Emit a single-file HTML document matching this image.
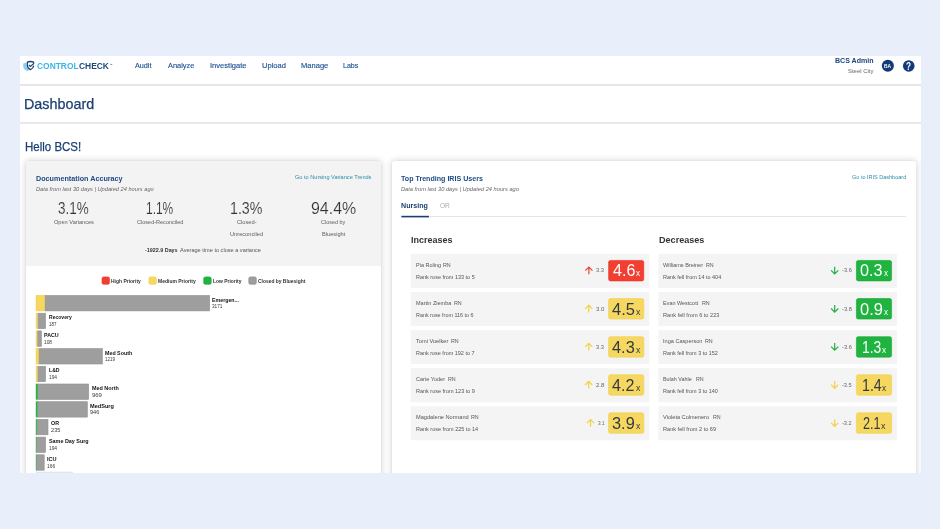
<!DOCTYPE html>
<html><head><meta charset="utf-8"><title>Dashboard</title>
<style>
html,body{margin:0;padding:0;}
body{width:940px;height:529px;overflow:hidden;background:#e8effa;font-family:"Liberation Sans", sans-serif;position:relative;}
#s div{position:absolute;}
#s svg{position:absolute;overflow:visible;}
#t{position:absolute;left:0;top:0;width:940px;height:529px;will-change:transform;}
#t span{position:absolute;white-space:pre;line-height:1;transform-origin:0 0;}
</style></head><body>
<div id="s">
<div style="left:20.00px;top:56.00px;width:901.00px;height:417.00px;background:#fff;"></div>
<div style="left:20.00px;top:84.00px;width:901.00px;height:2.00px;background:#e6e6e6;"></div>
<div style="left:20.00px;top:122.00px;width:901.00px;height:2.00px;background:#e9e9e9;"></div>
<div style="left:26px;top:161px;width:355px;height:330px;background:#fff;border-radius:2px;box-shadow:0 0 7px rgba(0,0,0,.2),0 0 1px rgba(0,0,0,.12);"></div>
<div style="left:26.00px;top:161.00px;width:355.00px;height:105.00px;background:#f3f3f3;border-radius:2px 2px 0 0;"></div>
<div style="left:392px;top:161px;width:524px;height:330px;background:#fff;border-radius:2px;box-shadow:0 0 7px rgba(0,0,0,.2),0 0 1px rgba(0,0,0,.12);"></div>
<svg style="left:0;top:0" width="940" height="529" viewBox="0 0 940 529">
<path d="M26.4 62.4 L23.2 63.6 L23.2 66.4 Q23.6 69.4 27.4 71 Q28.8 70.6 29.8 69.8 Q26.4 68.2 26.4 65 Z" fill="#86d3f0"/>
<path d="M33.65 63.7 V62.1 Q30.5 60.9 27.35 62.1 V65.6 Q27.4 68.3 30.5 69.55 Q33.4 68.4 33.8 65.7" fill="none" stroke="#1c4275" stroke-width="1.25" stroke-linejoin="round"/>
<path d="M28.9 65.0 L30.4 66.4 L33.75 63.5" fill="none" stroke="#1c4275" stroke-width="1.15"/>
</svg>
<svg style="left:0;top:0" width="940" height="529" viewBox="0 0 940 529"><circle cx="887.85" cy="65.8" r="6.05" fill="#12397a"/><circle cx="908.75" cy="65.95" r="5.8" fill="#12397a"/></svg>
<svg style="left:0;top:0" width="940" height="529" viewBox="0 0 940 529"><rect x="102.00" y="276.90" width="7.50" height="7.40" rx="1.6" fill="#f23f31" stroke="#ee2f27" stroke-width="0.6"/><rect x="148.90" y="276.90" width="7.50" height="7.40" rx="1.6" fill="#f6d860" stroke="#efce4c" stroke-width="0.6"/><rect x="203.70" y="276.90" width="7.50" height="7.40" rx="1.6" fill="#1fb33f" stroke="#17a536" stroke-width="0.6"/><rect x="248.80" y="276.90" width="7.50" height="7.40" rx="1.6" fill="#9e9e9e" stroke="#878787" stroke-width="0.6"/><rect x="44.90" y="295.50" width="164.70" height="15.40" fill="#9e9e9e" stroke="#8f8f8f" stroke-width="0.6"/><rect x="36.10" y="295.50" width="8.50" height="15.40" fill="#f6d860" stroke="#efcd45" stroke-width="0.6"/><rect x="37.70" y="313.20" width="7.80" height="15.40" fill="#9e9e9e" stroke="#8f8f8f" stroke-width="0.6"/><rect x="35.80" y="312.90" width="1.90" height="16.00" fill="#f6d860"/><rect x="37.30" y="330.90" width="4.10" height="15.40" fill="#9e9e9e" stroke="#8f8f8f" stroke-width="0.6"/><rect x="35.80" y="330.60" width="1.50" height="16.00" fill="#f6d860"/><rect x="38.70" y="348.60" width="63.60" height="15.40" fill="#9e9e9e" stroke="#8f8f8f" stroke-width="0.6"/><rect x="36.10" y="348.60" width="2.30" height="15.40" fill="#f6d860" stroke="#efcd45" stroke-width="0.6"/><rect x="37.50" y="366.30" width="8.00" height="15.40" fill="#9e9e9e" stroke="#8f8f8f" stroke-width="0.6"/><rect x="35.80" y="366.00" width="1.70" height="16.00" fill="#f6d860"/><rect x="37.70" y="384.00" width="50.90" height="15.40" fill="#9e9e9e" stroke="#8f8f8f" stroke-width="0.6"/><rect x="35.80" y="383.70" width="1.90" height="16.00" fill="#1fb33f"/><rect x="37.50" y="401.70" width="49.80" height="15.40" fill="#9e9e9e" stroke="#8f8f8f" stroke-width="0.6"/><rect x="35.80" y="401.40" width="1.70" height="16.00" fill="#1fb33f"/><rect x="36.80" y="419.40" width="11.20" height="15.40" fill="#9e9e9e" stroke="#8f8f8f" stroke-width="0.6"/><rect x="35.80" y="419.10" width="1.00" height="16.00" fill="#1fb33f"/><rect x="36.40" y="437.10" width="9.10" height="15.40" fill="#9e9e9e" stroke="#8f8f8f" stroke-width="0.6"/><rect x="35.80" y="436.80" width="0.60" height="16.00" fill="#1fb33f"/><rect x="36.40" y="454.80" width="7.80" height="15.40" fill="#9e9e9e" stroke="#8f8f8f" stroke-width="0.6"/><rect x="35.80" y="454.50" width="0.60" height="16.00" fill="#1fb33f"/><rect x="35.80" y="471.70" width="37.00" height="3.00" fill="#e4e4e4"/></svg>
<div style="left:401.00px;top:216.00px;width:505.00px;height:1.00px;background:#e4e4e4;"></div>
<svg style="left:0;top:0" width="940" height="529" viewBox="0 0 940 529"><rect x="401.4" y="215.8" width="27.5" height="1.6" fill="#1c3f72"/></svg>
<svg style="left:0;top:0" width="940" height="529" viewBox="0 0 940 529"><rect x="410.60" y="253.90" width="238.60" height="34.00" fill="#f4f4f4"/><rect x="608.60" y="260.45" width="35.20" height="20.50" rx="1.9" fill="#f23f31" stroke="#ee2f27" stroke-width="0.6"/><rect x="410.60" y="292.00" width="238.60" height="34.00" fill="#f4f4f4"/><rect x="608.60" y="298.55" width="35.20" height="20.50" rx="1.9" fill="#f6d860" stroke="#efce4c" stroke-width="0.6"/><rect x="410.60" y="330.10" width="238.60" height="34.00" fill="#f4f4f4"/><rect x="608.60" y="336.65" width="35.20" height="20.50" rx="1.9" fill="#f6d860" stroke="#efce4c" stroke-width="0.6"/><rect x="410.60" y="368.20" width="238.60" height="34.00" fill="#f4f4f4"/><rect x="608.60" y="374.75" width="35.20" height="20.50" rx="1.9" fill="#f6d860" stroke="#efce4c" stroke-width="0.6"/><rect x="410.60" y="406.30" width="238.60" height="34.00" fill="#f4f4f4"/><rect x="608.60" y="412.85" width="35.20" height="20.50" rx="1.9" fill="#f6d860" stroke="#efce4c" stroke-width="0.6"/><rect x="658.40" y="253.90" width="238.60" height="34.00" fill="#f4f4f4"/><rect x="856.40" y="260.45" width="35.20" height="20.50" rx="1.9" fill="#1fb33f" stroke="#17a536" stroke-width="0.6"/><rect x="658.40" y="292.00" width="238.60" height="34.00" fill="#f4f4f4"/><rect x="856.40" y="298.55" width="35.20" height="20.50" rx="1.9" fill="#1fb33f" stroke="#17a536" stroke-width="0.6"/><rect x="658.40" y="330.10" width="238.60" height="34.00" fill="#f4f4f4"/><rect x="856.40" y="336.65" width="35.20" height="20.50" rx="1.9" fill="#1fb33f" stroke="#17a536" stroke-width="0.6"/><rect x="658.40" y="368.20" width="238.60" height="34.00" fill="#f4f4f4"/><rect x="856.40" y="374.75" width="35.20" height="20.50" rx="1.9" fill="#f6d860" stroke="#efce4c" stroke-width="0.6"/><rect x="658.40" y="406.30" width="238.60" height="34.00" fill="#f4f4f4"/><rect x="856.40" y="412.85" width="35.20" height="20.50" rx="1.9" fill="#f6d860" stroke="#efce4c" stroke-width="0.6"/><path d="M588.90 274.30 V267.10 M585.30 270.70 L588.90 267.10 L592.50 270.70" stroke="#f23f31" fill="none" stroke-width="1.2"/><path d="M588.70 312.40 V305.20 M585.10 308.80 L588.70 305.20 L592.30 308.80" stroke="#f5d040" fill="none" stroke-width="1.2"/><path d="M588.80 350.50 V343.30 M585.20 346.90 L588.80 343.30 L592.40 346.90" stroke="#f5d040" fill="none" stroke-width="1.2"/><path d="M588.70 388.60 V381.40 M585.10 385.00 L588.70 381.40 L592.30 385.00" stroke="#f5d040" fill="none" stroke-width="1.2"/><path d="M590.50 426.70 V419.50 M586.90 423.10 L590.50 419.50 L594.10 423.10" stroke="#f5d040" fill="none" stroke-width="1.2"/><path d="M834.70 266.80 V274.00 M831.10 270.40 L834.70 274.00 L838.30 270.40" stroke="#1fb33f" fill="none" stroke-width="1.2"/><path d="M834.70 304.90 V312.10 M831.10 308.50 L834.70 312.10 L838.30 308.50" stroke="#1fb33f" fill="none" stroke-width="1.2"/><path d="M834.70 343.00 V350.20 M831.10 346.60 L834.70 350.20 L838.30 346.60" stroke="#1fb33f" fill="none" stroke-width="1.2"/><path d="M834.70 381.10 V388.30 M831.10 384.70 L834.70 388.30 L838.30 384.70" stroke="#f5d040" fill="none" stroke-width="1.2"/><path d="M834.70 419.20 V426.40 M831.10 422.80 L834.70 426.40 L838.30 422.80" stroke="#f5d040" fill="none" stroke-width="1.2"/></svg>
<div style="left:0.00px;top:473.00px;width:940.00px;height:56.00px;background:#e8effa;"></div>
</div>
<div id="t">
<span style="left:37.00px;top:62px;font-size:8.4px;color:#38b6e6;transform:scaleX(1.0051);font-weight:700;">CONTROL</span>
<span style="left:79.10px;top:62px;font-size:8.4px;color:#1c4a7a;transform:scaleX(1.0057);font-weight:700;">CHECK</span>
<span style="left:109.80px;top:63px;font-size:2.2px;color:#1c4a7a;transform:scaleX(0.6894);font-weight:700;">TM</span>
<span style="left:134.90px;top:62px;font-size:7.6px;color:#1e5394;transform:scaleX(0.9506);-webkit-text-stroke:0.15px #1e5394;">Audit</span>
<span style="left:167.70px;top:62px;font-size:7.6px;color:#1e5394;transform:scaleX(0.9779);-webkit-text-stroke:0.15px #1e5394;">Analyze</span>
<span style="left:209.70px;top:62px;font-size:7.6px;color:#1e5394;transform:scaleX(0.9944);-webkit-text-stroke:0.15px #1e5394;">Investigate</span>
<span style="left:261.50px;top:62px;font-size:7.6px;color:#1e5394;transform:scaleX(0.9983);-webkit-text-stroke:0.15px #1e5394;">Upload</span>
<span style="left:300.80px;top:62px;font-size:7.6px;color:#1e5394;transform:scaleX(0.9956);-webkit-text-stroke:0.15px #1e5394;">Manage</span>
<span style="left:343.40px;top:62px;font-size:7.6px;color:#1e5394;transform:scaleX(0.9298);-webkit-text-stroke:0.15px #1e5394;">Labs</span>
<span style="left:835.00px;top:57px;font-size:7.6px;color:#1a4480;transform:scaleX(0.9305);font-weight:700;">BCS Admin</span>
<span style="left:848.00px;top:68px;font-size:6.1px;color:#666;transform:scaleX(0.9767);">Steel City</span>
<span style="left:884.10px;top:64px;font-size:5.3px;color:#fff;transform:scaleX(0.9201);font-weight:700;">BA</span>
<span style="left:906.40px;top:62px;font-size:10.3px;color:#fff;transform:scaleX(0.8000);font-weight:700;">?</span>
<span style="left:24.46px;top:98px;font-size:13.8px;color:#1c3f72;transform:scaleX(1.0407);-webkit-text-stroke:0.25px #1c3f72;">Dashboard</span>
<span style="left:25.40px;top:142px;font-size:11.9px;color:#1c3f72;transform:scaleX(0.9663);-webkit-text-stroke:0.25px #1c3f72;">Hello BCS!</span>
<span style="left:35.50px;top:175px;font-size:8.0px;color:#1d4a86;transform:scaleX(0.9008);font-weight:700;">Documentation Accuracy</span>
<span style="left:35.50px;top:186px;font-size:6.1px;color:#666;transform:scaleX(0.9326);font-style:italic;">Data from last 30 days | Updated 24 hours ago</span>
<span style="left:295.20px;top:174px;font-size:6.0px;color:#2b8ca9;transform:scaleX(0.9325);">Go to Nursing Variance Trends</span>
<span style="left:58.40px;top:201px;font-size:16.8px;color:#333;transform:scaleX(0.8010);-webkit-text-stroke:0.15px #f3f3f3;">3.1%</span>
<span style="left:146.29px;top:201px;font-size:16.8px;color:#333;transform:scaleX(0.7126);-webkit-text-stroke:0.15px #f3f3f3;">1.1%</span>
<span style="left:229.95px;top:201px;font-size:16.8px;color:#333;transform:scaleX(0.8465);-webkit-text-stroke:0.15px #f3f3f3;">1.3%</span>
<span style="left:310.60px;top:201px;font-size:16.8px;color:#333;transform:scaleX(0.9505);-webkit-text-stroke:0.15px #f3f3f3;">94.4%</span>
<span style="left:54.00px;top:219px;font-size:6.2px;color:#5c5c5c;transform:scaleX(0.9083);">Open Variances</span>
<span style="left:136.80px;top:219px;font-size:6.2px;color:#5c5c5c;transform:scaleX(0.8935);">Closed-Reconciled</span>
<span style="left:236.85px;top:219px;font-size:6.2px;color:#5c5c5c;transform:scaleX(0.9172);">Closed-</span>
<span style="left:230.00px;top:231px;font-size:6.2px;color:#5c5c5c;transform:scaleX(0.9162);">Unreconciled</span>
<span style="left:320.80px;top:219px;font-size:6.2px;color:#5c5c5c;transform:scaleX(0.8796);">Closed by</span>
<span style="left:321.55px;top:231px;font-size:6.2px;color:#5c5c5c;transform:scaleX(0.9132);">Bluesight</span>
<span style="left:145.30px;top:247px;font-size:6.0px;color:#333;transform:scaleX(0.8967);font-weight:700;">-1922.9 Days</span>
<span style="left:180.40px;top:247px;font-size:6.0px;color:#555;transform:scaleX(0.9315);">Average time to close a variance</span>
<span style="left:111.30px;top:279px;font-size:5.3px;color:#333;transform:scaleX(0.9391);font-weight:700;">High Priority</span>
<span style="left:158.10px;top:279px;font-size:5.3px;color:#333;transform:scaleX(0.9431);font-weight:700;">Medium Priority</span>
<span style="left:213.00px;top:279px;font-size:5.3px;color:#333;transform:scaleX(0.9295);font-weight:700;">Low Priority</span>
<span style="left:258.30px;top:279px;font-size:5.3px;color:#333;transform:scaleX(0.9286);font-weight:700;">Closed by Bluesight</span>
<span style="left:212.30px;top:298px;font-size:5.5px;color:#111;transform:scaleX(0.9583);font-weight:700;">Emergen...</span>
<span style="left:212.30px;top:304px;font-size:5.2px;color:#383838;transform:scaleX(0.9095);">3171</span>
<span style="left:48.70px;top:315px;font-size:5.5px;color:#111;transform:scaleX(0.9180);font-weight:700;">Recovery</span>
<span style="left:48.70px;top:322px;font-size:5.2px;color:#383838;transform:scaleX(0.8552);">187</span>
<span style="left:44.00px;top:333px;font-size:5.5px;color:#111;transform:scaleX(0.9668);font-weight:700;">PACU</span>
<span style="left:44.00px;top:340px;font-size:5.2px;color:#383838;transform:scaleX(0.9236);">108</span>
<span style="left:105.00px;top:351px;font-size:5.5px;color:#111;transform:scaleX(0.9670);font-weight:700;">Med South</span>
<span style="left:105.00px;top:357px;font-size:5.2px;color:#383838;transform:scaleX(0.8752);">1219</span>
<span style="left:48.70px;top:368px;font-size:5.5px;color:#111;transform:scaleX(0.9354);font-weight:700;">L&amp;D</span>
<span style="left:48.70px;top:375px;font-size:5.2px;color:#383838;transform:scaleX(0.9236);">194</span>
<span style="left:91.60px;top:386px;font-size:5.5px;color:#111;transform:scaleX(0.9845);font-weight:700;">Med North</span>
<span style="left:91.60px;top:393px;font-size:5.2px;color:#383838;transform:scaleX(1.1402);">969</span>
<span style="left:90.30px;top:404px;font-size:5.5px;color:#111;transform:scaleX(1.0186);font-weight:700;">MedSurg</span>
<span style="left:90.30px;top:410px;font-size:5.2px;color:#383838;transform:scaleX(1.0718);">946</span>
<span style="left:51.10px;top:421px;font-size:5.5px;color:#111;transform:scaleX(0.9664);font-weight:700;">OR</span>
<span style="left:51.10px;top:428px;font-size:5.2px;color:#383838;transform:scaleX(1.0832);">235</span>
<span style="left:48.70px;top:439px;font-size:5.5px;color:#111;transform:scaleX(0.9827);font-weight:700;">Same Day Surg</span>
<span style="left:48.70px;top:446px;font-size:5.2px;color:#383838;transform:scaleX(0.9236);">194</span>
<span style="left:47.00px;top:457px;font-size:5.5px;color:#111;transform:scaleX(1.0105);font-weight:700;">ICU</span>
<span style="left:47.00px;top:464px;font-size:5.2px;color:#383838;transform:scaleX(0.9464);">166</span>
<span style="left:401.40px;top:175px;font-size:8.0px;color:#1d4a86;transform:scaleX(0.8874);font-weight:700;">Top Trending IRIS Users</span>
<span style="left:401.40px;top:186px;font-size:6.1px;color:#666;transform:scaleX(0.9342);font-style:italic;">Data from last 30 days | Updated 24 hours ago</span>
<span style="left:852.30px;top:174px;font-size:6.0px;color:#2b8ca9;transform:scaleX(0.9183);">Go to IRIS Dashboard</span>
<span style="left:401.40px;top:202px;font-size:7.7px;color:#1c3f72;transform:scaleX(0.9235);font-weight:700;">Nursing</span>
<span style="left:439.90px;top:202px;font-size:7.7px;color:#aaa;transform:scaleX(0.8514);">OR</span>
<span style="left:410.70px;top:235px;font-size:9.5px;color:#333;transform:scaleX(0.9459);font-weight:700;">Increases</span>
<span style="left:658.70px;top:235px;font-size:9.5px;color:#333;transform:scaleX(0.9543);font-weight:700;">Decreases</span>
<span style="left:415.60px;top:262px;font-size:6.0px;color:#555;transform:scaleX(0.9144);">Pia Roling</span>
<span style="left:443.20px;top:262px;font-size:6.0px;color:#555;transform:scaleX(0.8880);">RN</span>
<span style="left:415.60px;top:274px;font-size:6.0px;color:#555;transform:scaleX(0.9119);">Rank rose from 133 to 5</span>
<span style="left:612.60px;top:262px;font-size:16.4px;color:#fff;transform:scaleX(0.9837);">4.6</span>
<span style="left:636.00px;top:269px;font-size:9.2px;color:#fff;transform:scaleX(0.9000);">x</span>
<span style="left:595.90px;top:268px;font-size:5.6px;color:#666;transform:scaleX(1.0306);">3.3</span>
<span style="left:415.60px;top:300px;font-size:6.0px;color:#555;transform:scaleX(0.9204);">Martin Ziemba</span>
<span style="left:454.40px;top:300px;font-size:6.0px;color:#555;transform:scaleX(0.8880);">RN</span>
<span style="left:415.60px;top:312px;font-size:6.0px;color:#555;transform:scaleX(0.8996);">Rank rose from 116 to 6</span>
<span style="left:612.40px;top:301px;font-size:16.4px;color:#343a44;transform:scaleX(1.0058);">4.5</span>
<span style="left:635.90px;top:308px;font-size:9.2px;color:#343a44;transform:scaleX(0.9600);">x</span>
<span style="left:595.70px;top:307px;font-size:5.6px;color:#666;transform:scaleX(1.0828);">3.0</span>
<span style="left:415.60px;top:338px;font-size:6.0px;color:#555;transform:scaleX(0.9403);">Tomi Voelker</span>
<span style="left:450.80px;top:338px;font-size:6.0px;color:#555;transform:scaleX(0.8880);">RN</span>
<span style="left:415.60px;top:350px;font-size:6.0px;color:#555;transform:scaleX(0.9088);">Rank rose from 192 to 7</span>
<span style="left:612.40px;top:339px;font-size:16.4px;color:#343a44;transform:scaleX(0.9969);">4.3</span>
<span style="left:635.90px;top:346px;font-size:9.2px;color:#343a44;transform:scaleX(0.9600);">x</span>
<span style="left:595.80px;top:345px;font-size:5.6px;color:#666;transform:scaleX(1.0176);">3.3</span>
<span style="left:415.60px;top:376px;font-size:6.0px;color:#555;transform:scaleX(0.9248);">Carie Yoder</span>
<span style="left:447.60px;top:376px;font-size:6.0px;color:#555;transform:scaleX(0.8880);">RN</span>
<span style="left:415.60px;top:388px;font-size:6.0px;color:#555;transform:scaleX(0.9150);">Rank rose from 123 to 9</span>
<span style="left:612.40px;top:377px;font-size:16.4px;color:#343a44;transform:scaleX(0.9793);">4.2</span>
<span style="left:635.90px;top:384px;font-size:9.2px;color:#343a44;transform:scaleX(0.9600);">x</span>
<span style="left:595.70px;top:383px;font-size:5.6px;color:#666;transform:scaleX(1.0828);">2.8</span>
<span style="left:415.60px;top:414px;font-size:6.0px;color:#555;transform:scaleX(0.9408);">Magdalene Normand</span>
<span style="left:470.90px;top:414px;font-size:6.0px;color:#555;transform:scaleX(0.8880);">RN</span>
<span style="left:415.60px;top:426px;font-size:6.0px;color:#555;transform:scaleX(0.9171);">Rank rose from 225 to 14</span>
<span style="left:612.40px;top:415px;font-size:16.4px;color:#343a44;transform:scaleX(0.9969);">3.9</span>
<span style="left:635.90px;top:422px;font-size:9.2px;color:#343a44;transform:scaleX(0.9600);">x</span>
<span style="left:597.50px;top:421px;font-size:5.6px;color:#666;transform:scaleX(0.8480);">3.1</span>
<span style="left:663.40px;top:262px;font-size:6.0px;color:#555;transform:scaleX(0.9229);">Williams Breiner</span>
<span style="left:706.30px;top:262px;font-size:6.0px;color:#555;transform:scaleX(0.8880);">RN</span>
<span style="left:663.40px;top:274px;font-size:6.0px;color:#555;transform:scaleX(0.9136);">Rank fell from 14 to 404</span>
<span style="left:860.40px;top:262px;font-size:16.4px;color:#fff;transform:scaleX(0.9881);">0.3</span>
<span style="left:883.80px;top:269px;font-size:9.2px;color:#fff;transform:scaleX(0.8800);">x</span>
<span style="left:842.00px;top:268px;font-size:5.6px;color:#666;transform:scaleX(1.0181);">-3.6</span>
<span style="left:663.40px;top:300px;font-size:6.0px;color:#555;transform:scaleX(0.9125);">Evan Westcott</span>
<span style="left:701.80px;top:300px;font-size:6.0px;color:#555;transform:scaleX(0.8880);">RN</span>
<span style="left:663.40px;top:312px;font-size:6.0px;color:#555;transform:scaleX(0.9340);">Rank fell from 6 to 223</span>
<span style="left:860.20px;top:301px;font-size:16.4px;color:#fff;transform:scaleX(1.0058);">0.9</span>
<span style="left:883.80px;top:308px;font-size:9.2px;color:#fff;transform:scaleX(0.8800);">x</span>
<span style="left:842.00px;top:307px;font-size:5.6px;color:#666;transform:scaleX(1.0181);">-3.8</span>
<span style="left:663.40px;top:338px;font-size:6.0px;color:#555;transform:scaleX(0.9304);">Inga Casperson</span>
<span style="left:705.40px;top:338px;font-size:6.0px;color:#555;transform:scaleX(0.8880);">RN</span>
<span style="left:663.40px;top:350px;font-size:6.0px;color:#555;transform:scaleX(0.9094);">Rank fell from 3 to 152</span>
<span style="left:861.55px;top:339px;font-size:16.4px;color:#fff;transform:scaleX(0.8491);">1.3</span>
<span style="left:881.70px;top:346px;font-size:9.2px;color:#fff;transform:scaleX(0.9200);">x</span>
<span style="left:842.00px;top:345px;font-size:5.6px;color:#666;transform:scaleX(1.0181);">-3.6</span>
<span style="left:663.40px;top:376px;font-size:6.0px;color:#555;transform:scaleX(0.9025);">Bulah Vahle</span>
<span style="left:695.70px;top:376px;font-size:6.0px;color:#555;transform:scaleX(0.8880);">RN</span>
<span style="left:663.40px;top:388px;font-size:6.0px;color:#555;transform:scaleX(0.9094);">Rank fell from 3 to 140</span>
<span style="left:861.53px;top:377px;font-size:16.4px;color:#343a44;transform:scaleX(0.8676);">1.4</span>
<span style="left:882.00px;top:384px;font-size:9.2px;color:#343a44;transform:scaleX(0.9000);">x</span>
<span style="left:842.00px;top:383px;font-size:5.6px;color:#666;transform:scaleX(0.9971);">-3.5</span>
<span style="left:663.40px;top:414px;font-size:6.0px;color:#555;transform:scaleX(0.9356);">Violeta Colmenero</span>
<span style="left:713.00px;top:414px;font-size:6.0px;color:#555;transform:scaleX(0.8880);">RN</span>
<span style="left:663.40px;top:426px;font-size:6.0px;color:#555;transform:scaleX(0.9308);">Rank fell from 2 to 69</span>
<span style="left:862.60px;top:415px;font-size:16.4px;color:#343a44;transform:scaleX(0.7720);">2.1</span>
<span style="left:880.80px;top:422px;font-size:9.2px;color:#343a44;transform:scaleX(0.9800);">x</span>
<span style="left:842.00px;top:421px;font-size:5.6px;color:#666;transform:scaleX(0.9866);">-3.2</span>
</div>
</body></html>
